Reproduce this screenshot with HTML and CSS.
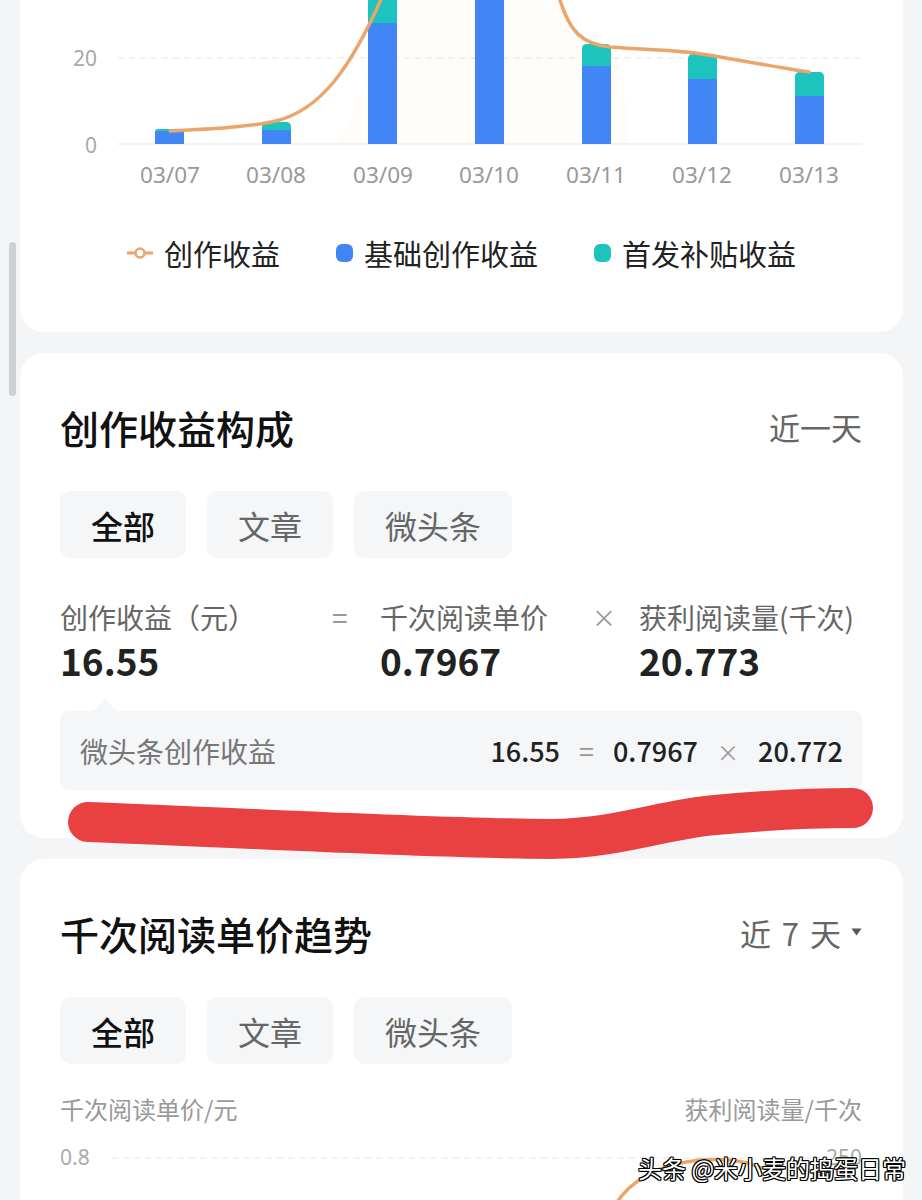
FILE: index.html
```html
<!DOCTYPE html>
<html lang="zh-CN">
<head>
<meta charset="utf-8">
<title>创作收益</title>
<link rel="stylesheet" href="styles.css">
</head>
<body>
<div class="page">
  <div class="scrollbar"></div>

  <section class="card card-chart">
    <svg class="chart" width="883" height="200" viewBox="20 0 883 200">
      <text class="ylabel" x="97" y="66" text-anchor="end">20</text>
      <text class="ylabel" x="97" y="153" text-anchor="end">0</text>
      <line x1="118" y1="58" x2="862" y2="58" stroke="#eeeeee" stroke-width="1.5" stroke-dasharray="6 5"/>
      <line x1="118" y1="144" x2="862" y2="144" stroke="#eeeeee" stroke-width="1.5"/>
      <path d="M340,144 C360,100 370,60 383,-5 C410,-70 540,-80 560,0 C570,32 582,44 610,47 C620,48 625,90 630,144 Z" fill="#f5a55a" fill-opacity="0.035"/>
      <!-- bars -->
      <path d="M155,132 Q155,129 158,129 H181 Q184,129 184,132 V144 H155 Z" fill="#1dc4bd"/>
      <rect x="155" y="131" width="29" height="13" fill="#4286f5"/>
      <path d="M262,127 Q262,122 267,122 H286 Q291,122 291,127 V144 H262 Z" fill="#1dc4bd"/>
      <rect x="262" y="130" width="29" height="14" fill="#4286f5"/>
      <rect x="368" y="-10" width="29" height="154" fill="#1dc4bd"/>
      <rect x="368" y="23" width="29" height="121" fill="#4286f5"/>
      <rect x="475" y="-10" width="29" height="154" fill="#4286f5"/>
      <path d="M582,49 Q582,44 587,44 H606 Q611,44 611,49 V144 H582 Z" fill="#1dc4bd"/>
      <rect x="582" y="66" width="29" height="78" fill="#4286f5"/>
      <path d="M688,59 Q688,54 693,54 H712 Q717,54 717,59 V144 H688 Z" fill="#1dc4bd"/>
      <rect x="688" y="79" width="29" height="65" fill="#4286f5"/>
      <path d="M795,77 Q795,72 800,72 H819 Q824,72 824,77 V144 H795 Z" fill="#1dc4bd"/>
      <rect x="795" y="96" width="29" height="48" fill="#4286f5"/>
      <!-- line -->
      <path d="M170,131 C210,129 250,127 276,121 C320,110 350,70 383,-5 C410,-70 540,-80 560,0 C570,32 582,44 610,47 C650,50 680,50 702,54 C740,60 780,68 809,72" fill="none" stroke="#eba56b" stroke-width="3.5" stroke-linecap="round"/>
      <!-- x labels -->
      <text class="xlabel" x="170" y="183">03/07</text>
      <text class="xlabel" x="276" y="183">03/08</text>
      <text class="xlabel" x="383" y="183">03/09</text>
      <text class="xlabel" x="489" y="183">03/10</text>
      <text class="xlabel" x="596" y="183">03/11</text>
      <text class="xlabel" x="702" y="183">03/12</text>
      <text class="xlabel" x="809" y="183">03/13</text>
    </svg>
    <div class="legend">
      <div class="legend-item">
        <svg class="legend-line" width="26" height="14" viewBox="0 0 26 14">
          <line x1="0" y1="7" x2="26" y2="7" stroke="#eba56b" stroke-width="3"/>
          <circle cx="13" cy="7" r="4.5" fill="#fff" stroke="#eba56b" stroke-width="2.5"/>
        </svg>
        <span>创作收益</span>
      </div>
      <div class="legend-item">
        <span class="legend-dot blue"></span>
        <span>基础创作收益</span>
      </div>
      <div class="legend-item">
        <span class="legend-dot teal"></span>
        <span>首发补贴收益</span>
      </div>
    </div>
  </section>

  <section class="card card-mid">
    <div class="card-head">
      <h2 class="card-title">创作收益构成</h2>
      <span class="card-range">近一天</span>
    </div>
    <div class="tabs">
      <span class="tab active">全部</span>
      <span class="tab">文章</span>
      <span class="tab">微头条</span>
    </div>
    <div class="formula">
      <span class="f-label">创作收益（元）</span>
      <span class="f-op">=</span>
      <span class="f-label">千次阅读单价</span>
      <span class="f-op f-times">×</span>
      <span class="f-label">获利阅读量(千次)</span>
      <span class="f-value">16.55</span>
      <span></span>
      <span class="f-value">0.7967</span>
      <span></span>
      <span class="f-value">20.773</span>
    </div>
    <div class="sub-box">
      <span class="sub-label">微头条创作收益</span>
      <span class="sub-calc">
        <b>16.55</b><i>=</i><b>0.7967</b><i class="times">×</i><b>20.772</b>
      </span>
    </div>
  </section>

  <section class="card card-last">
    <div class="card-head">
      <h2 class="card-title">千次阅读单价趋势</h2>
      <span class="card-range range-select">近 7 天
        <svg width="11" height="8" viewBox="0 0 11 8"><path d="M0.5,0.5 H10.5 L5.5,7.5 Z" fill="#555"/></svg>
      </span>
    </div>
    <div class="tabs">
      <span class="tab active">全部</span>
      <span class="tab">文章</span>
      <span class="tab">微头条</span>
    </div>
    <div class="axis-titles">
      <span>千次阅读单价/元</span>
      <span>获利阅读量/千次</span>
    </div>
    <svg class="chart2" width="883" height="110" viewBox="20 1130 883 110">
      <text class="ylabel2" x="60" y="1164">0.8</text>
      <text class="ylabel2" x="862" y="1164" text-anchor="end">250</text>
      <line x1="112" y1="1157" x2="840" y2="1157" stroke="#eeeeee" stroke-width="1.5" stroke-dasharray="6 5"/>
      <path d="M615,1204 C632,1177 662,1163 700,1159 C728,1157 745,1160 762,1167" fill="none" stroke="#eba56b" stroke-width="3.5" stroke-linecap="round"/>
    </svg>
  </section>

  <svg class="marker" width="922" height="100" viewBox="0 770 922 100">
    <path d="M88,822 C250,828 420,838 550,839 C620,838 660,820 715,815 C770,810 820,808 853,808" fill="none" stroke="#e94141" stroke-width="40" stroke-linecap="round" stroke-linejoin="round"/>
  </svg>

  <div class="watermark">头条 @米小麦的捣蛋日常</div>
</div>
</body>
</html>
```

FILE: styles.css
```css
* {
  box-sizing: border-box;
}

body {
  margin: 0;
  background: #f4f5f7;
  font-family: "Noto Sans CJK SC", "Noto Sans", sans-serif;
  color: #222;
}

.page {
  position: relative;
  width: 922px;
  padding: 0 19px 40px 20px;
  display: flex;
  flex-direction: column;
  gap: 21px;
}

.scrollbar {
  position: absolute;
  left: 9px;
  top: 242px;
  width: 7px;
  height: 154px;
  border-radius: 4px;
  background: #cfd0d4;
}

.card {
  background: #fff;
  border-radius: 24px;
  padding: 52px 41px 47px 40px;
}

.card-chart {
  border-radius: 0 0 24px 24px;
  padding: 0 0 59px 0;
}

.chart {
  display: block;
}

.ylabel {
  font-family: "Noto Sans", sans-serif;
  font-size: 21px;
  fill: #a8a8a8;
}

.xlabel {
  font-family: "Noto Sans", sans-serif;
  font-size: 22.5px;
  fill: #999;
  text-anchor: middle;
}

.legend {
  display: flex;
  justify-content: center;
  gap: 56px;
  margin-top: 33px;
  height: 40px;
  align-items: center;
  font-size: 29px;
  color: #222;
}

.legend-item {
  display: flex;
  align-items: center;
  gap: 11px;
}

.legend-line {
  display: block;
}

.legend-dot {
  display: block;
  width: 17px;
  height: 18px;
  border-radius: 6px;
}

.legend-dot.blue {
  background: #4286f5;
}

.legend-dot.teal {
  background: #1dc4bd;
}

.card-head {
  display: flex;
  justify-content: space-between;
  align-items: center;
  height: 50px;
}

.card-title {
  margin: -6px 0 0 0;
  font-size: 39px;
  font-weight: 500;
  color: #111;
  line-height: 50px;
}

.card-range {
  font-size: 31px;
  color: #666;
  margin-top: -8px;
}

.range-select {
  display: flex;
  align-items: center;
  gap: 10px;
  word-spacing: 4px;
}

.range-select svg {
  display: block;
}

.tabs {
  display: flex;
  gap: 21px;
  margin-top: 36px;
}

.tab {
  height: 67px;
  padding: 0 31px;
  background: #f5f6f8;
  border-radius: 10px;
  display: flex;
  align-items: center;
  font-size: 32px;
  color: #666;
}

.tab.active {
  color: #111;
  font-weight: 500;
}

.formula {
  display: grid;
  grid-template-columns: 272px 48px 212px 47px 1fr;
  margin-top: 39px;
}

.f-label {
  font-size: 28px;
  line-height: 40px;
  color: #666;
  white-space: nowrap;
}

.f-op {
  font-size: 28px;
  line-height: 40px;
  color: #999;
}

.f-times {
  font-size: 24px;
}

.f-value {
  font-size: 37px;
  line-height: 46px;
  font-weight: 600;
  color: #222;
}

.card-mid {
  padding-bottom: 48px;
}

.sub-box {
  position: relative;
  margin-top: 28px;
  height: 79px;
  background: #f5f6f8;
  border-radius: 8px;
  padding: 0 19px 0 20px;
  display: flex;
  align-items: center;
  justify-content: space-between;
}

.sub-box::before {
  content: "";
  position: absolute;
  left: 33px;
  top: -12px;
  border-left: 12px solid transparent;
  border-right: 12px solid transparent;
  border-bottom: 12px solid #f5f6f8;
}

.sub-label {
  font-size: 28px;
  color: #777;
}

.sub-calc {
  display: flex;
  align-items: center;
  gap: 19px;
  font-size: 27px;
}

.sub-calc b {
  font-weight: 500;
  color: #222;
}

.sub-calc i {
  font-style: normal;
  color: #999;
}

.sub-calc i.times {
  font-size: 22px;
}

.card-last {
  padding-bottom: 0;
  border-radius: 24px 24px 0 0;
}

.axis-titles {
  display: flex;
  justify-content: space-between;
  margin-top: 30px;
  font-size: 24px;
  line-height: 30px;
  color: #999;
}

.chart2 {
  display: block;
  margin: 7px -41px 0 -40px;
}

.ylabel2 {
  font-family: "Noto Sans", sans-serif;
  font-size: 21px;
  fill: #aaa;
}

.marker {
  position: absolute;
  left: 0;
  top: 770px;
  pointer-events: none;
}

.watermark {
  position: absolute;
  left: 638px;
  top: 1152px;
  font-size: 24px;
  line-height: 32px;
  color: #fff;
  white-space: nowrap;
  text-shadow:
    1px 0 0 #000, -1px 0 0 #000, 0 1px 0 #000, 0 -1px 0 #000,
    1px 1px 0 #000, -1px -1px 0 #000, 1px -1px 0 #000, -1px 1px 0 #000;
}
```
